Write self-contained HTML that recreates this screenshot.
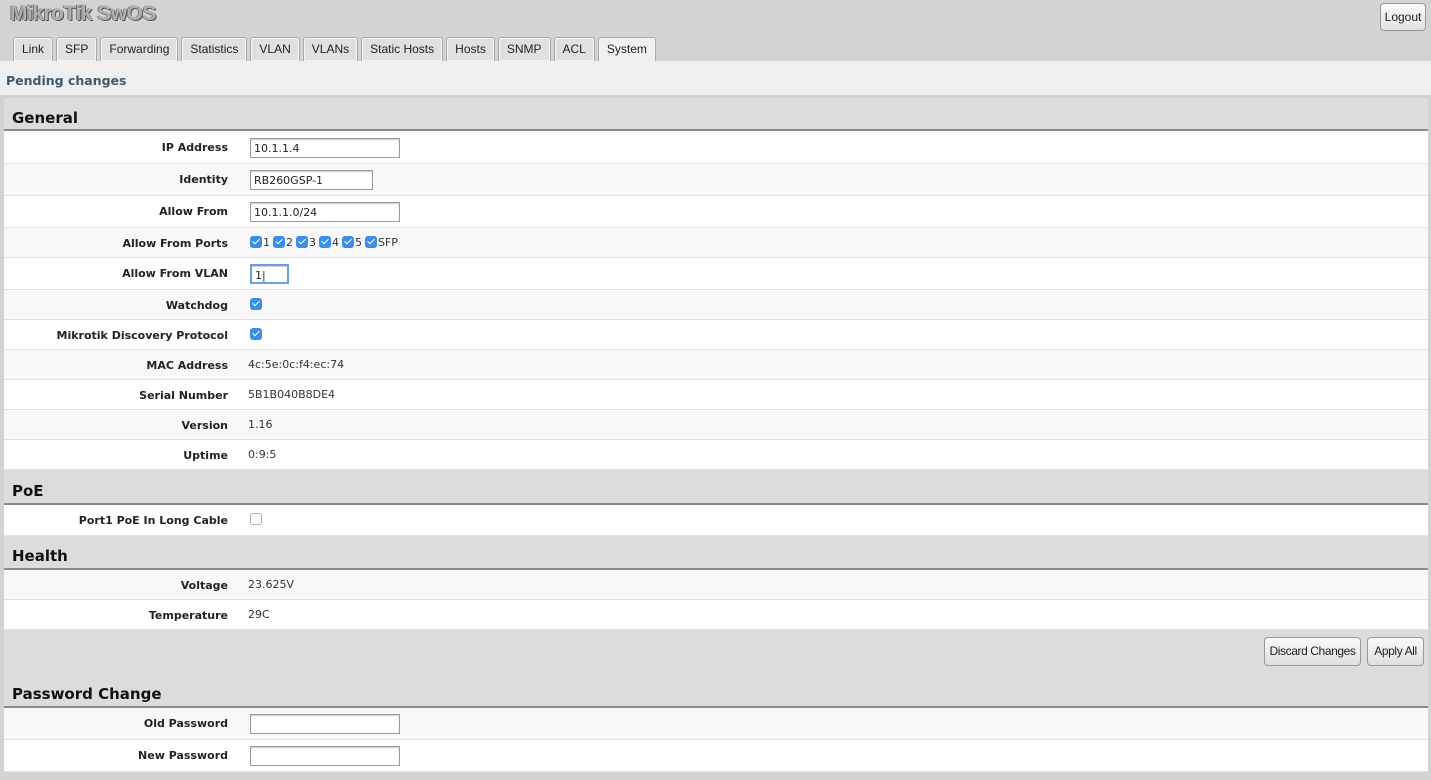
<!DOCTYPE html>
<html><head><meta charset="utf-8"><style>
*{box-sizing:border-box;margin:0;padding:0}
body{width:1431px;height:780px;overflow:hidden;background:#d3d3d3;font-family:"Liberation Sans",Verdana,sans-serif;font-size:12px;color:#222;position:relative}
.logo{position:absolute;left:10px;top:2px;font-size:21px;font-weight:bold;color:#b0b0b0;text-shadow:1px 1px 0 #555,-1px 0 0 #777;letter-spacing:-0.5px}
.logout{position:absolute;left:1380px;top:3px;width:46px;height:28px;border:1px solid #999;border-radius:4px;background:linear-gradient(#fafafa,#e2e2e2);font-size:12px;text-align:center;line-height:26px}
.tabs{position:absolute;top:37px;left:13px;display:flex;gap:3px}
.tab{height:24px;padding:0 8px;border:1px solid #aaa;border-bottom:none;border-radius:3px 3px 0 0;background:#e0e0e0;line-height:23px;font-size:12px;box-shadow:inset 0 0 0 1px #f4f4f4}
.tab.act{background:#f0f0f0;height:25px}
.pend{position:absolute;top:61px;left:0;width:1431px;height:34px;background:#efefef;color:#3d5a70;font-weight:bold;padding:12px 0 0 6px;font-family:"DejaVu Sans",sans-serif;font-size:12.5px}
.main{position:absolute;left:4px;top:98px;width:1424px}
.sh{height:33px;background:#dcdcdc;border-bottom:2px solid #8a8a8a;font-weight:bold;font-size:15px;padding:11px 0 0 8px;color:#111;font-family:"DejaVu Sans",sans-serif}
.row{height:30px;border-bottom:1px solid #e2e2e2;background:#f8f8f8;position:relative}
.row:nth-child(odd){background:#fff}
.lb{position:absolute;right:1200px;top:1px;line-height:30px;font-weight:bold;font-size:11px;white-space:nowrap;font-family:"DejaVu Sans",sans-serif}
.v{position:absolute;left:244px;top:0;line-height:30px;font-size:11px;color:#333;font-family:"DejaVu Sans",sans-serif}
.in{position:absolute;left:246px;top:6px;height:20px;border:1px solid #999;background:#fff;font-size:11px;padding:2px 3px;line-height:15px;box-shadow:inset 0 1px 1px #ccc;font-family:"DejaVu Sans",sans-serif}
.cb{display:inline-block;width:12px;height:12px;border-radius:3px;background:#3b8ee8;vertical-align:-2px;position:relative;margin-right:1px}
.p .cb{margin-left:3px}.p .cb:first-child{margin-left:0}
.cb:after{content:"";position:absolute;left:4px;top:1px;width:3px;height:6px;border:solid #fff;border-width:0 1.5px 1.5px 0;transform:rotate(45deg)}
.cbo{display:inline-block;width:12px;height:12px;border-radius:3px;border:1px solid #aaa;background:#fff;vertical-align:-2px}
.btnbar{height:46px;background:#dcdcdc;position:relative}
.btn{position:absolute;top:7px;height:29px;border:1px solid #999;border-radius:4px;background:linear-gradient(#fafafa,#e0e0e0);line-height:27px;font-size:12px;text-align:center;letter-spacing:-0.4px}
</style></head><body>
<div class="logo">MikroTik SwOS</div>
<div class="logout">Logout</div>
<div class="tabs"><div class="tab">Link</div><div class="tab">SFP</div><div class="tab">Forwarding</div><div class="tab">Statistics</div><div class="tab">VLAN</div><div class="tab">VLANs</div><div class="tab">Static Hosts</div><div class="tab">Hosts</div><div class="tab">SNMP</div><div class="tab">ACL</div><div class="tab act">System</div></div>
<div class="pend">Pending changes</div>
<div class="main">
<div class="sh">General</div>
<div>
<div class="row" style="height:33px"><div class="lb" style="top:2px">IP Address</div><div class="in" style="width:150px;top:7px">10.1.1.4</div></div>
<div class="row" style="height:32px"><div class="lb">Identity</div><div class="in" style="width:123px">RB260GSP-1</div></div>
<div class="row" style="height:32px"><div class="lb">Allow From</div><div class="in" style="width:150px">10.1.1.0/24</div></div>
<div class="row"><div class="lb">Allow From Ports</div><div class="v p" style="left:246px"><span class="cb"></span>1<span class="cb"></span>2<span class="cb"></span>3<span class="cb"></span>4<span class="cb"></span>5<span class="cb"></span>SFP</div></div>
<div class="row" style="height:32px"><div class="lb">Allow From VLAN</div><div class="in" style="width:39px;border:2px solid #6aa0e0">1|</div></div>
<div class="row"><div class="lb">Watchdog</div><div class="v" style="left:246px"><span class="cb"></span></div></div>
<div class="row"><div class="lb">Mikrotik Discovery Protocol</div><div class="v" style="left:246px"><span class="cb"></span></div></div>
<div class="row"><div class="lb">MAC Address</div><div class="v">4c:5e:0c:f4:ec:74</div></div>
<div class="row"><div class="lb">Serial Number</div><div class="v">5B1B040B8DE4</div></div>
<div class="row"><div class="lb">Version</div><div class="v">1.16</div></div>
<div class="row"><div class="lb">Uptime</div><div class="v">0:9:5</div></div>
</div>
<div class="sh" style="height:35px;padding-top:12px">PoE</div>
<div><div class="row" style="background:#fff;height:31px"><div class="lb">Port1 PoE In Long Cable</div><div class="v" style="left:246px"><span class="cbo"></span></div></div></div>
<div class="sh" style="height:34px">Health</div>
<div><div class="row" style="background:#f8f8f8"><div class="lb">Voltage</div><div class="v">23.625V</div></div>
<div class="row" style="background:#fff"><div class="lb">Temperature</div><div class="v">29C</div></div></div>
<div class="btnbar"><div class="btn" style="left:1260px;width:97px">Discard Changes</div><div class="btn" style="left:1363px;width:57px">Apply All</div></div>
<div class="sh" style="height:32px;padding-top:9px">Password Change</div>
<div><div class="row" style="height:32px;background:#f8f8f8"><div class="lb">Old Password</div><div class="in" style="width:150px"></div></div>
<div class="row" style="height:32px;background:#fff"><div class="lb">New Password</div><div class="in" style="width:150px"></div></div></div>
</div>
</body></html>
